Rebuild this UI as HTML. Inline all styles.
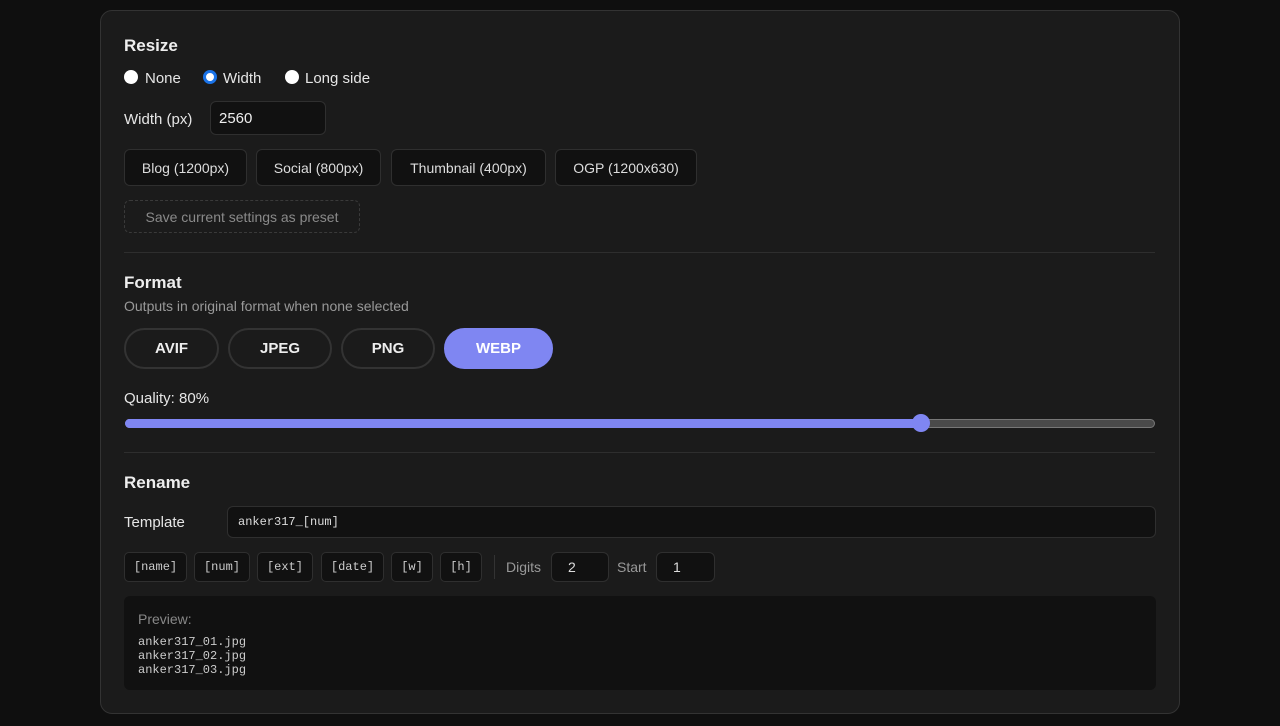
<!DOCTYPE html>
<html><head><style>
*{box-sizing:border-box;margin:0;padding:0}
body{width:1280px;height:726px;background:#0f0f0f;font-family:"Liberation Sans",sans-serif;color:#e6e6e6;position:relative;overflow:hidden}
.card{position:absolute;left:100px;top:10px;width:1080px;height:704px;background:#1b1b1b;border:1px solid #333;border-radius:12px}
.a{position:absolute;white-space:nowrap}
.h{font-weight:bold;font-size:17px;color:#eee}
.t{font-size:15px}
.box{position:absolute;background:#111;border:1px solid #2f2f2f;border-radius:6px;font-size:14px;display:flex;align-items:center;justify-content:center;color:#ddd}
.radio{position:absolute;width:14px;height:14px;border-radius:50%;background:#fff}
.pill{position:absolute;top:328px;height:41px;border:2px solid #333;border-radius:21px;font-weight:bold;font-size:15px;display:flex;align-items:center;justify-content:center;color:#eee}
.hr{position:absolute;left:124px;width:1031px;height:1px;background:#2e2e2e}
.mono{font-family:"Liberation Mono","DejaVu Sans Mono",monospace;font-size:12px}
.tok{position:absolute;top:552px;height:30px;background:#111;border:1px solid #2f2f2f;border-radius:5px;display:flex;align-items:center;justify-content:center;color:#ccc}
</style></head><body>
<div class="card"></div>
<div class="a h" style="left:124px;top:36px">Resize</div>
<div class="radio" style="left:124px;top:70px"></div><div class="a t" style="left:145px;top:70px">None</div>
<div class="radio" style="left:203px;top:70px;background:#fff;border:3.5px solid #1a73e8"></div><div class="a t" style="left:223px;top:70px">Width</div>
<div class="radio" style="left:285px;top:70px"></div><div class="a t" style="left:305px;top:70px">Long side</div>
<div class="a t" style="left:124px;top:111px">Width (px)</div>
<div class="box" style="left:210px;top:101px;width:116px;height:34px;justify-content:flex-start;padding-left:8px;font-size:15px;color:#eee">2560</div>
<div class="box" style="left:124px;top:149px;width:123px;height:37px">Blog (1200px)</div>
<div class="box" style="left:256px;top:149px;width:125px;height:37px">Social (800px)</div>
<div class="box" style="left:391px;top:149px;width:155px;height:37px">Thumbnail (400px)</div>
<div class="box" style="left:555px;top:149px;width:142px;height:37px">OGP (1200x630)</div>
<div class="box" style="left:124px;top:200px;width:236px;height:33px;background:transparent;border:1px dashed #3a3a3a;color:#8a8a8a">Save current settings as preset</div>
<div class="hr" style="top:252px"></div>
<div class="a h" style="left:124px;top:273px">Format</div>
<div class="a" style="left:124px;top:298px;font-size:14px;color:#999">Outputs in original format when none selected</div>
<div class="pill" style="left:124px;width:95px">AVIF</div>
<div class="pill" style="left:228px;width:104px">JPEG</div>
<div class="pill" style="left:341px;width:94px">PNG</div>
<div class="pill" style="left:444px;width:109px;background:#7f86f2;border-color:#7f86f2;color:#fff">WEBP</div>
<div class="a t" style="left:124px;top:390px">Quality: 80%</div>
<div class="a" style="left:125px;top:419px;width:1030px;height:9px;border-radius:5px;background:#4a4a4a;border:1px solid #777"></div>
<div class="a" style="left:125px;top:419px;width:796px;height:9px;border-radius:5px;background:#7f86f2"></div>
<div class="a" style="left:912px;top:414px;width:18px;height:18px;border-radius:50%;background:#7f86f2"></div>
<div class="hr" style="top:452px"></div>
<div class="a h" style="left:124px;top:473px">Rename</div>
<div class="a t" style="left:124px;top:514px">Template</div>
<div class="box mono" style="left:227px;top:506px;width:929px;height:32px;justify-content:flex-start;padding-left:10px;color:#ddd">anker317_[num]</div>
<div class="tok mono" style="left:124px;width:63px">[name]</div>
<div class="tok mono" style="left:194px;width:56px">[num]</div>
<div class="tok mono" style="left:257px;width:56px">[ext]</div>
<div class="tok mono" style="left:321px;width:63px">[date]</div>
<div class="tok mono" style="left:391px;width:42px">[w]</div>
<div class="tok mono" style="left:440px;width:42px">[h]</div>
<div class="a" style="left:494px;top:555px;width:1px;height:24px;background:#333"></div>
<div class="a" style="left:506px;top:559px;font-size:14px;color:#999">Digits</div>
<div class="box" style="left:551px;top:552px;width:58px;height:30px;justify-content:flex-start;padding-left:16px;font-size:14px">2</div>
<div class="a" style="left:617px;top:559px;font-size:14px;color:#999">Start</div>
<div class="box" style="left:656px;top:552px;width:59px;height:30px;justify-content:flex-start;padding-left:16px;font-size:14px">1</div>
<div class="a" style="left:124px;top:596px;width:1032px;height:94px;background:#111;border-radius:6px"></div>
<div class="a" style="left:138px;top:611px;font-size:14px;color:#888">Preview:</div>
<div class="a mono" style="left:138px;top:635px;line-height:14px;color:#ccc">anker317_01.jpg<br>anker317_02.jpg<br>anker317_03.jpg</div>
</body></html>
